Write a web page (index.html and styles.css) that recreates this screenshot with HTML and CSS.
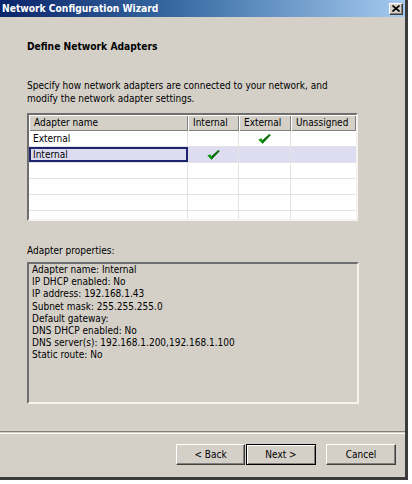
FILE: index.html
```html
<!DOCTYPE html>
<html>
<head>
<meta charset="utf-8">
<link rel="stylesheet" href="styles.css">
</head>
<body>
<div class="window">
  <div class="titlebar">
    <span class="title">Network Configuration Wizard</span>
    <span class="close"><svg width="8" height="7" viewBox="0 0 8 7"><path d="M0.5 0.5 L7.5 6.5 M7.5 0.5 L0.5 6.5" stroke="#000" stroke-width="1.6" fill="none"/></svg></span>
  </div>
  <div class="content">
    <div class="heading">Define Network Adapters</div>
    <div class="desc">Specify how network adapters are connected to your network, and<br>modify the network adapter settings.</div>
    <div class="list">
      <div class="row header">
        <div class="c c1">Adapter name</div>
        <div class="c c2">Internal</div>
        <div class="c c3">External</div>
        <div class="c c4">Unassigned</div>
      </div>
      <div class="row">
        <div class="c c1">External</div>
        <div class="c c2"></div>
        <div class="c c3 chk"><svg class="check" width="13" height="10" viewBox="0 0 13 10"><path d="M0.3 5.6 L3.2 4.3 L4.5 6.2 L11.2 0.2 L12.7 1 L4.4 9.7 Z" fill="#109a10"/><path d="M4.5 6.2 L11.2 0.2 L12.7 1 L4.4 9.7 Z" fill="#0a6a0a"/></svg></div>
        <div class="c c4"></div>
      </div>
      <div class="row sel">
        <div class="c c1 focus">Internal</div>
        <div class="c c2 chk"><svg class="check" width="13" height="10" viewBox="0 0 13 10"><path d="M0.3 5.6 L3.2 4.3 L4.5 6.2 L11.2 0.2 L12.7 1 L4.4 9.7 Z" fill="#109a10"/><path d="M4.5 6.2 L11.2 0.2 L12.7 1 L4.4 9.7 Z" fill="#0a6a0a"/></svg></div>
        <div class="c c3"></div>
        <div class="c c4"></div>
      </div>
      <div class="row"><div class="c c1"></div><div class="c c2"></div><div class="c c3"></div><div class="c c4"></div></div>
      <div class="row"><div class="c c1"></div><div class="c c2"></div><div class="c c3"></div><div class="c c4"></div></div>
      <div class="row"><div class="c c1"></div><div class="c c2"></div><div class="c c3"></div><div class="c c4"></div></div>
      <div class="row"><div class="c c1"></div><div class="c c2"></div><div class="c c3"></div><div class="c c4"></div></div>
    </div>
    <div class="label">Adapter properties:</div>
    <div class="props">
      <div>Adapter name: Internal</div>
      <div>IP DHCP enabled: No</div>
      <div>IP address: 192.168.1.43</div>
      <div>Subnet mask: 255.255.255.0</div>
      <div>Default gateway:</div>
      <div>DNS DHCP enabled: No</div>
      <div>DNS server(s): 192.168.1.200,192.168.1.100</div>
      <div>Static route: No</div>
    </div>
  </div>
  <div class="sep"></div>
  <div class="buttons">
    <div class="btn back">&lt; Back</div>
    <div class="btn next">Next &gt;</div>
    <div class="btn cancel">Cancel</div>
  </div>
</div>
</body>
</html>
```
FILE: styles.css
```css
html, body {
  margin: 0;
  padding: 0;
  background: #ffffff;
}
body {
  font-family: "DejaVu Sans Condensed", "DejaVu Sans", sans-serif;
  font-size: 10px;
  color: #000;
}
.window {
  width: 405px;
  height: 477px;
  background: #d4d0c8;
  border-right: 3px solid #3c3c3c;
  border-bottom: 3px solid #3c3c3c;
  display: flex;
  flex-direction: column;
}
.titlebar {
  height: 17px;
  background: linear-gradient(to right, #0a246a 0%, #3a6ea5 45%, #a6caf0 100%);
  display: flex;
  align-items: center;
  justify-content: space-between;
  padding-left: 2px;
  padding-right: 2px;
}
.title {
  color: #fff;
  font-weight: bold;
  font-size: 10.2px;
  line-height: 17px;
}
.close {
  width: 14px;
  height: 12px;
  box-sizing: border-box;
  background: #d4d0c8;
  border-top: 1px solid #fff;
  border-left: 1px solid #fff;
  border-right: 1px solid #404040;
  border-bottom: 1px solid #404040;
  box-shadow: inset -1px -1px 0 #808080;
  display: flex;
  align-items: center;
  justify-content: center;
}
.content {
  padding-left: 27px;
  display: flex;
  flex-direction: column;
  align-items: flex-start;
}
.heading {
  font-weight: bold;
  font-size: 10.2px;
  line-height: 13px;
  margin-top: 23px;
}
.desc {
  line-height: 13px;
  margin-top: 26px;
}
.list {
  margin-top: 8px;
  width: 331px;
  height: 108px;
  box-sizing: border-box;
  border-top: 2px solid #6e6e6e;
  border-left: 2px solid #6e6e6e;
  border-right: 2px solid #f4f3ef;
  border-bottom: 2px solid #f4f3ef;
  background: #fff;
  overflow: hidden;
}
.row {
  display: flex;
  height: 16px;
  box-sizing: border-box;
  border-bottom: 1px solid #e3e3e3;
}
.c {
  box-sizing: border-box;
  height: 100%;
  border-right: 1px solid #e3e3e3;
  padding-left: 4px;
  line-height: 15px;
  white-space: nowrap;
}
.c1 { width: 159px; }
.c2 { width: 51px; }
.c3 { width: 52px; }
.c4 { width: 65px; border-right: none; }
.row.header {
  border-bottom: none;
  background: #d4d0c8;
}
.row.header .c {
  border-right: none;
  border-left: 1px solid #fff;
  border-top: 1px solid #fff;
  box-shadow: inset -1px -1px 0 #808080;
  line-height: 14px;
  padding-left: 4px;
}
.row.sel {
  background: #dedcf0;
}
.c.focus {
  border: 2px solid #1e246e;
  padding-left: 2px;
  line-height: 11px;
}
.c.chk {
  display: flex;
  justify-content: center;
  align-items: center;
  padding-left: 0;
}
.label {
  line-height: 13px;
  margin-top: 23px;
}
.props {
  margin-top: 5px;
  width: 332px;
  height: 142px;
  box-sizing: border-box;
  border-top: 2px solid #6e6e6e;
  border-left: 2px solid #6e6e6e;
  border-right: 2px solid #f4f3ef;
  border-bottom: 2px solid #f4f3ef;
  padding-left: 3px;
  line-height: 12.2px;
}
.sep {
  margin-top: 27px;
  height: 1px;
  border-top: 1px solid #808080;
  border-bottom: 1px solid #fff;
}
.buttons {
  margin-top: 10px;
  display: flex;
  justify-content: flex-end;
  padding-right: 9px;
}
.btn {
  width: 69px;
  height: 21px;
  box-sizing: border-box;
  border-top: 1px solid #fff;
  border-left: 1px solid #fff;
  border-right: 1px solid #404040;
  border-bottom: 1px solid #404040;
  box-shadow: inset -1px -1px 0 #808080;
  display: flex;
  align-items: center;
  justify-content: center;
  line-height: 12px;
}
.btn.next {
  width: 70px;
  margin-left: 1px;
  border: 1px solid #000;
  box-shadow: inset 1px 1px 0 #fff, inset -1px -1px 0 #808080;
}
.btn.cancel {
  width: 70px;
  margin-left: 10px;
}
```
